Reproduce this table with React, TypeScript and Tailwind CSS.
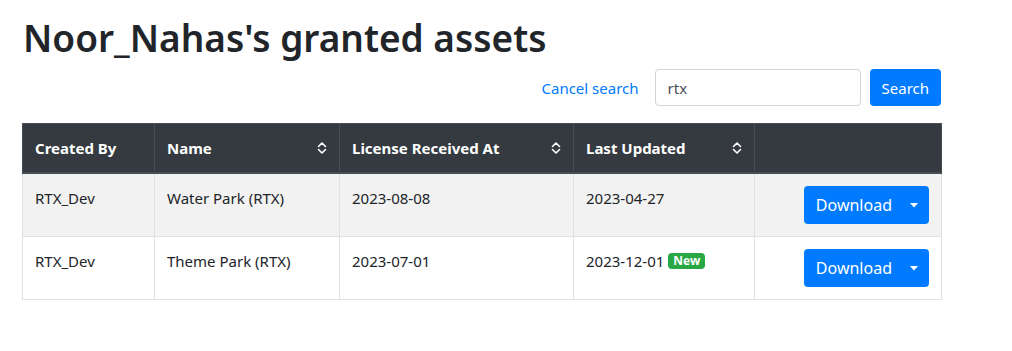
type Asset = {
  createdBy: string;
  name: string;
  received: string;
  updated: string;
  isNew?: boolean;
};

const ASSETS: Asset[] = [
  { createdBy: 'RTX_Dev', name: 'Water Park (RTX)', received: '2023-08-08', updated: '2023-04-27' },
  { createdBy: 'RTX_Dev', name: 'Theme Park (RTX)', received: '2023-07-01', updated: '2023-12-01', isNew: true },
];

function SortIcon() {
  return (
    <svg width="10" height="14" viewBox="0 0 10 14" fill="none" stroke="white" strokeWidth="1.6" strokeLinecap="round" strokeLinejoin="round">
      <path d="M1.5 5.5 L5 2 L8.5 5.5" />
      <path d="M1.5 8.5 L5 12 L8.5 8.5" />
    </svg>
  );
}

function HeadCell({ label, width, sortable }: { label: string; width: string; sortable?: boolean }) {
  return (
    <th className={`${width} border border-[#454d55] border-b-2 px-3 py-3 text-left align-top font-bold text-white`}>
      <div className="flex items-center justify-between h-6">
        <span>{label}</span>
        {sortable && <SortIcon />}
      </div>
    </th>
  );
}

export default function App() {
  return (
    <div className="pl-[22px] pt-[14px] text-[#212529] text-[15px] leading-6" style={{ fontFamily: '"Noto Sans", "Open Sans", sans-serif' }}>
      <h1 className="text-[37px] leading-[48px] font-semibold ml-px">Noor_Nahas's granted assets</h1>

      <div className="w-[920px] flex items-center justify-end mt-[7px]">
        <a href="#" className="text-[#007bff] mr-4">Cancel search</a>
        <input
          defaultValue="rtx"
          className="w-[206px] h-[37px] border border-[#ced4da] rounded px-3 text-[#495057] outline-none"
        />
        <button className="ml-[9px] mr-px h-[37px] px-3 rounded bg-[#007bff] text-white">Search</button>
      </div>

      <table className="w-[920px] border-collapse mt-[17px]">
        <thead className="bg-[#343a40]">
          <tr>
            <HeadCell label="Created By" width="w-[132px]" />
            <HeadCell label="Name" width="w-[185px]" sortable />
            <HeadCell label="License Received At" width="w-[234px]" sortable />
            <HeadCell label="Last Updated" width="w-[181px]" sortable />
            <th className="border border-[#454d55] border-b-2" />
          </tr>
        </thead>
        <tbody>
          {ASSETS.map((a, i) => (
            <tr key={a.name} className={i % 2 === 0 ? 'bg-[#f2f2f2]' : 'bg-white'}>
              <td className="border border-[#dee2e6] p-3 align-top">{a.createdBy}</td>
              <td className="border border-[#dee2e6] p-3 align-top">{a.name}</td>
              <td className="border border-[#dee2e6] p-3 align-top">{a.received}</td>
              <td className="border border-[#dee2e6] p-3 align-top">
                {a.updated}
                {a.isNew && (
                  <span className="ml-1 inline-block rounded bg-[#28a745] px-[5px] text-[12px] leading-[16px] font-bold text-white align-[2px]">New</span>
                )}
              </td>
              <td className="border border-[#dee2e6] p-3 align-top">
                <div className="flex justify-end">
                  <div className="flex h-[38px] rounded bg-[#007bff] text-white text-[16px]">
                    <button className="pl-[12px] pr-[11px]">Download</button>
                    <button className="w-[26px] flex items-center justify-center pr-[4px]">
                      <svg width="8" height="5" viewBox="0 0 8 5"><path d="M0 0 H8 L4 4.5 Z" fill="white" /></svg>
                    </button>
                  </div>
                </div>
              </td>
            </tr>
          ))}
        </tbody>
      </table>
    </div>
  );
}
